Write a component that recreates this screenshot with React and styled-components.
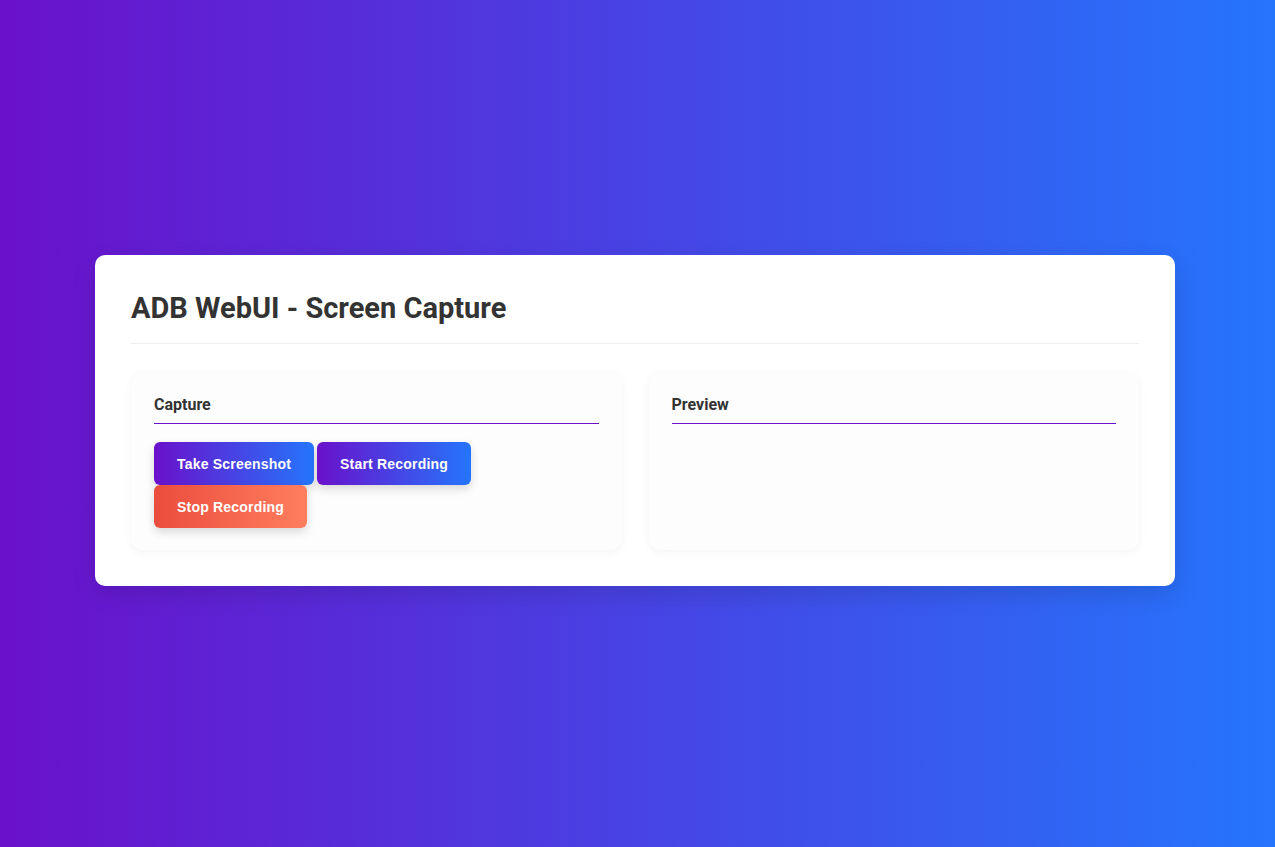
import React from 'react'
import styled, { createGlobalStyle } from 'styled-components'

const GlobalStyle = createGlobalStyle`
  * { box-sizing: border-box; }
  html, body { margin: 0; padding: 0; }
  body {
    font-family: Roboto, "Liberation Sans", Arial, sans-serif;
    background: linear-gradient(to right, #6a11cb 0%, #2575fc 100%);
    min-height: 100vh;
  }
`

const Page = styled.div`
  min-height: 100vh;
  display: flex;
  align-items: center;
  justify-content: center;
  padding: 0 100px 0 95px;
`

const Card = styled.div`
  width: 1080px;
  background: #ffffff;
  border-radius: 10px;
  padding: 36px;
  box-shadow: 0 8px 24px rgba(0, 0, 0, 0.12);
  margin-top: -6px;
`

const Title = styled.h1`
  margin: 0 0 29px;
  padding-bottom: 18px;
  border-bottom: 1px solid #eeeeee;
  font-size: 29px;
  line-height: 34px;
  font-weight: 700;
  color: #333333;
`

const Grid = styled.div`
  display: grid;
  grid-template-columns: 1fr 1fr;
  gap: 27px;
`

const Panel = styled.section`
  background: #fdfdfd;
  border-radius: 12px;
  padding: 22px 23px;
  box-shadow: 0 2px 10px rgba(0, 0, 0, 0.05);
`

const PanelTitle = styled.h2`
  margin: 0 0 18px;
  padding-bottom: 8px;
  border-bottom: 1px solid #6a11cb;
  font-size: 16px;
  line-height: 20px;
  font-weight: 700;
  color: #333333;
`

const Buttons = styled.div`
  display: flex;
  flex-wrap: wrap;
  column-gap: 3px;
  row-gap: 0;
`

const Button = styled.button`
  font-family: "Liberation Sans", Arial, sans-serif;
  font-size: 14px;
  font-weight: 700;
  letter-spacing: 0.2px;
  color: #ffffff;
  border: none;
  border-radius: 6px;
  height: 43px;
  padding: 0 23px;
  cursor: pointer;
  background: ${p => p.$danger
    ? 'linear-gradient(to right, #eb4d3d, #ff7e5f)'
    : 'linear-gradient(to right, #6a11cb, #2575fc)'};
  box-shadow: 0 4px 10px rgba(0, 0, 0, 0.15);
`

export default function App() {
  return (
    <>
      <GlobalStyle />
      <Page>
        <Card>
          <Title>ADB WebUI - Screen Capture</Title>
          <Grid>
            <Panel>
              <PanelTitle>Capture</PanelTitle>
              <Buttons>
                <Button>Take Screenshot</Button>
                <Button>Start Recording</Button>
                <Button $danger>Stop Recording</Button>
              </Buttons>
            </Panel>
            <Panel>
              <PanelTitle>Preview</PanelTitle>
            </Panel>
          </Grid>
        </Card>
      </Page>
    </>
  )
}
